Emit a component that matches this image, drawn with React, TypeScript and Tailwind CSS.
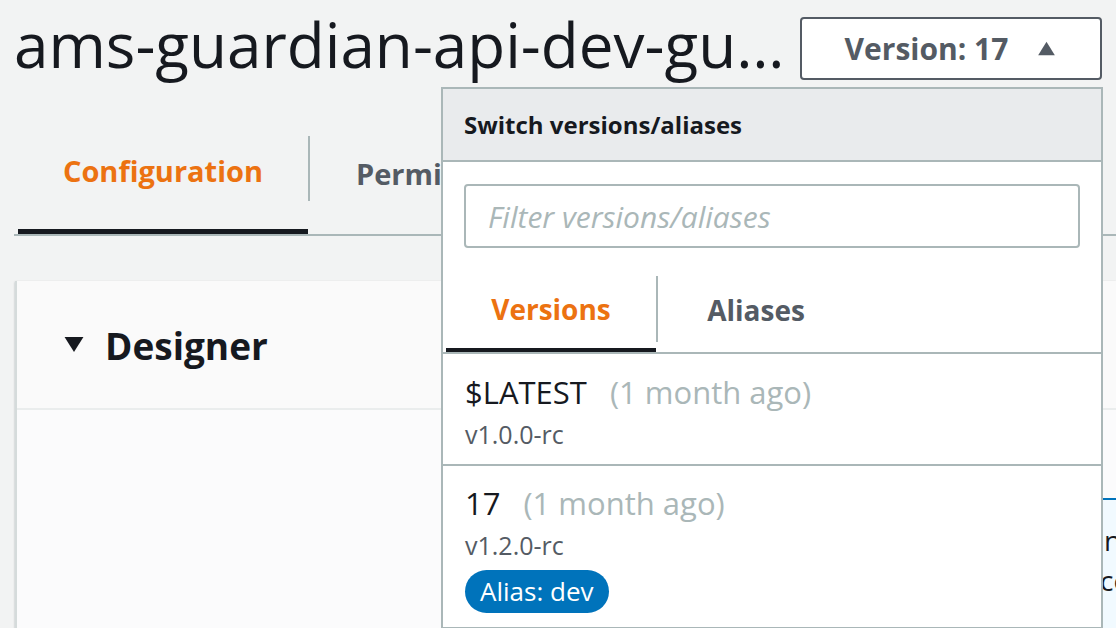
const VERSIONS = [
  { name: "$LATEST", age: "(1 month ago)", desc: "v1.0.0-rc", alias: null as string | null, pt: "pt-[18px]" },
  { name: "17", age: "(1 month ago)", desc: "v1.2.0-rc", alias: "dev", pt: "pt-[17px]" },
];

function Caret({ up, className }: { up?: boolean; className?: string }) {
  return (
    <svg viewBox="0 0 22 18" className={className}>
      {up ? <path d="M11 1 L21 17 L1 17 Z" fill="currentColor" /> : <path d="M1 1 L21 1 L11 17 Z" fill="currentColor" />}
    </svg>
  );
}

function VersionMenu() {
  return (
    <div className="absolute left-[441px] top-[87px] z-10 h-[580px] w-[662px] border-2 border-[#aab7b8] bg-white">
      <div className="flex h-[73px] items-center border-b-2 border-[#aab7b8] bg-[#e9ebed] pl-[21px] text-[24px] font-bold text-[#16191f]">
        Switch versions/aliases
      </div>

      <div className="px-[21px] pt-[22px]">
        <input
          placeholder="Filter versions/aliases"
          className="h-[64px] w-full rounded-[4px] border-2 border-[#aab7b8] px-[22px] text-[30px] italic outline-none placeholder:text-[#aab7b8]"
        />
      </div>

      <div className="mt-[20px] flex items-start border-b-2 border-[#aab7b8]">
        <div className="ml-[3px] flex h-[84px] w-[210px] items-center justify-center border-b-4 border-[#16191f] pt-[2px] text-[28px] font-bold text-[#ec7211]">
          Versions
        </div>
        <div className="mt-[8px] h-[66px] w-[2px] bg-[#aab7b8]" />
        <div className="flex h-[84px] w-[196px] items-center justify-center text-[28px] font-bold text-[#545b64]">
          Aliases
        </div>
      </div>

      {VERSIONS.map((v) => (
        <div key={v.name} className={`border-b-2 border-[#aab7b8] pb-[14px] pl-[22px] ${v.pt}`}>
          <div className="flex items-baseline gap-[23px] text-[31px] leading-[40px]">
            <span className="text-[#16191f]">{v.name}</span>
            <span className="text-[#aab7b8]">{v.age}</span>
          </div>
          <div className="mt-[6px] text-[25px] leading-[32px] text-[#545b64]">{v.desc}</div>
          {v.alias ? (
            <div className="mt-[9px] flex">
              <span className="flex h-[43px] items-center rounded-full bg-[#0073bb] px-[15px] text-[26px] text-white">
                Alias: {v.alias}
              </span>
            </div>
          ) : null}
        </div>
      ))}
    </div>
  );
}

export default function App() {
  return (
    <div className="relative h-[628px] w-[1116px] overflow-hidden bg-[#f2f3f3] font-['Open_Sans',sans-serif] text-[#16191f]">
      <div className="flex h-[80px] items-end pl-[14px]">
        <h1 className="w-[772px] shrink-0 whitespace-nowrap text-[62px] leading-[72px]">
          ams-guardian-api-dev-gu…
        </h1>
        <button className="ml-[14px] flex h-[63px] w-[302px] shrink-0 items-center justify-center gap-[28px] rounded-[4px] border-2 border-[#545b64] bg-white text-[30px] font-bold text-[#545b64]">
          Version: 17
          <Caret up className="h-[15px] w-[21px]" />
        </button>
      </div>

      <div className="ml-[14px] mt-[30px] flex items-start border-b-2 border-[#aab7b8]">
        <div className="ml-[4px] flex h-[124px] w-[290px] items-center justify-center border-b-[5px] border-[#16191f] pt-[3px] text-[29px] font-bold text-[#ec7211]">
          Configuration
        </div>
        <div className="mt-[26px] h-[65px] w-[2px] bg-[#aab7b8]" />
        <div className="flex h-[124px] items-center pl-[46px] pt-[3px] text-[29px] font-bold text-[#545b64]">
          Permissions
        </div>
      </div>

      <div className="ml-[15px] mt-[45px] border-l-2 border-[#d5dbdb] bg-[#fafafa] shadow-[0_1px_2px_rgba(0,28,36,0.3)]">
        <div className="flex h-[129px] items-center gap-[20px] border-b-2 border-[#eaeded] pl-[46px]">
          <Caret className="h-[17px] w-[22px] text-[#16191f]" />
          <span className="pt-[2px] text-[37px] font-bold">Designer</span>
        </div>
        <div className="relative h-[260px] bg-[#fbfbfc]">
          <div className="absolute left-[1073px] top-[88px] h-[200px] w-[200px] border-t-2 border-[#0073bb] bg-[#f1faff] pl-[14px] pt-[20px] text-[28px] leading-[40px] text-[#16191f]">
            <div>nct</div>
            <div className="-ml-[4px]">co</div>
          </div>
        </div>
      </div>

      <VersionMenu />
    </div>
  );
}
